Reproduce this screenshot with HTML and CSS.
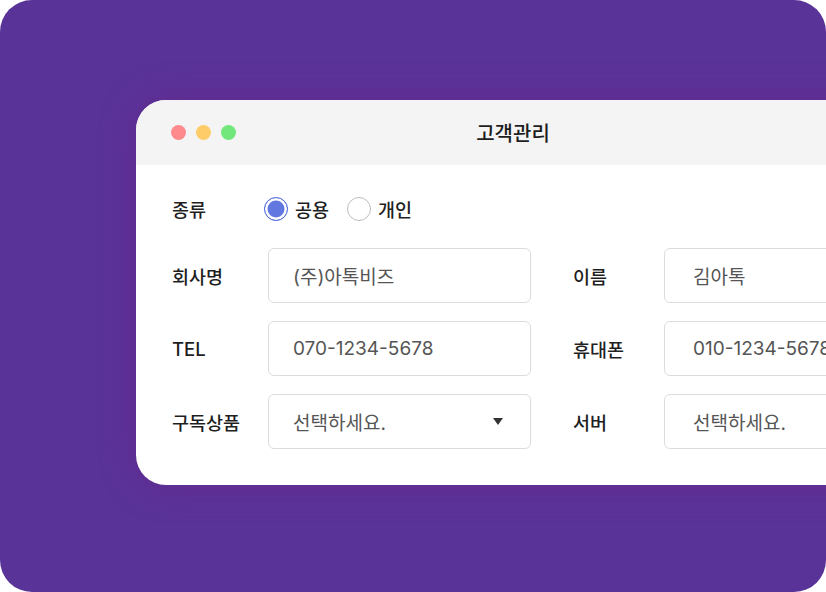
FILE: index.html
```html
<!DOCTYPE html>
<html lang="ko">
<head>
<meta charset="utf-8">
<link rel="stylesheet" href="styles.css">
</head>
<body>
<div class="stage">
  <div class="window">
    <div class="titlebar">
      <div class="dots">
        <span class="dot red"></span>
        <span class="dot yellow"></span>
        <span class="dot green"></span>
      </div>
      <div class="title">고객관리</div>
    </div>
    <div class="form">
      <div class="radio-row">
        <div class="label">종류</div>
        <div class="radios">
          <span class="radio checked"></span><span class="radio-text">공용</span>
          <span class="radio"></span><span class="radio-text">개인</span>
        </div>
      </div>
      <div class="row">
        <div class="field">
          <div class="label">회사명</div>
          <div class="input">(주)아톡비즈</div>
        </div>
        <div class="field right">
          <div class="label">이름</div>
          <div class="input">김아톡</div>
        </div>
      </div>
      <div class="row">
        <div class="field">
          <div class="label">TEL</div>
          <div class="input">070-1234-5678</div>
        </div>
        <div class="field right">
          <div class="label">휴대폰</div>
          <div class="input">010-1234-5678</div>
        </div>
      </div>
      <div class="row">
        <div class="field">
          <div class="label">구독상품</div>
          <div class="input select">선택하세요.<span class="caret"></span></div>
        </div>
        <div class="field right">
          <div class="label">서버</div>
          <div class="input select">선택하세요.<span class="caret"></span></div>
        </div>
      </div>
    </div>
  </div>
</div>
</body>
</html>
```
FILE: styles.css
```css
* { box-sizing: border-box; }
html, body { margin: 0; padding: 0; background: #ffffff; }
body {
  font-family: Inter, "Noto Sans CJK KR", "Noto Sans", sans-serif;
  width: 826px;
  height: 592px;
  overflow: hidden;
}
.stage {
  width: 826px;
  height: 592px;
  border-radius: 32px;
  background: #5a3399;
  overflow: hidden;
  padding: 100px 0 0 136px;
  display: flex;
  align-items: flex-start;
}
.window {
  flex-shrink: 0;
  width: 754px;
  background: #ffffff;
  border-radius: 30px 0 0 30px;
  overflow: hidden;
  box-shadow: 0 0 36px rgba(110, 30, 130, 0.45);
}
.titlebar {
  height: 65px;
  background: #f4f4f4;
  position: relative;
  display: flex;
  align-items: center;
  justify-content: center;
}
.dots {
  position: absolute;
  left: 35px;
  top: 25px;
  display: flex;
  gap: 10px;
}
.dot { width: 15px; height: 15px; border-radius: 50%; display: block; }
.red { background: #ff8a8e; }
.yellow { background: #ffcc6a; }
.green { background: #72e77c; }
.title {
  font-size: 20px;
  font-weight: 500;
  color: #1e1e1e;
}
.form {
  padding: 26px 0 36px 36px;
}
.radio-row {
  height: 36px;
  display: flex;
  align-items: center;
  margin-bottom: 21px;
}
.radio-row .label { width: 92px; }
.label {
  font-size: 18.5px;
  font-weight: 500;
  color: #1f1f1f;
  width: 96px;
  flex-shrink: 0;
}
.radios { display: flex; align-items: center; }
.radio {
  width: 24px;
  height: 24px;
  border-radius: 50%;
  border: 1.5px solid #bdbdbd;
  background: #fff;
  display: block;
  flex-shrink: 0;
}
.radio.checked {
  border-color: #5a6fdc;
  background: #6277e0;
  box-shadow: inset 0 0 0 2.5px #fff;
}
.radio-text {
  font-size: 18.5px;
  font-weight: 500;
  color: #1f1f1f;
  margin: 0 18px 0 7px;
}
.row {
  display: flex;
  margin-bottom: 18px;
}
.row:last-child { margin-bottom: 0; }
.field { display: flex; align-items: center; }
.field.right { margin-left: 42px; }
.field.right .label { width: 91px; }
.input {
  width: 263px;
  height: 55px;
  border: 1px solid #dcdcdc;
  border-radius: 6px;
  padding: 0 24px;
  display: flex;
  align-items: center;
  font-size: 19px;
  color: #555555;
  white-space: nowrap;
  overflow: hidden;
  flex-shrink: 0;
}
.field.right .input { padding-left: 28px; }
.select { justify-content: space-between; padding-right: 27px; }
.caret {
  width: 0;
  height: 0;
  border-left: 5.5px solid transparent;
  border-right: 5.5px solid transparent;
  border-top: 7px solid #333;
}
```
